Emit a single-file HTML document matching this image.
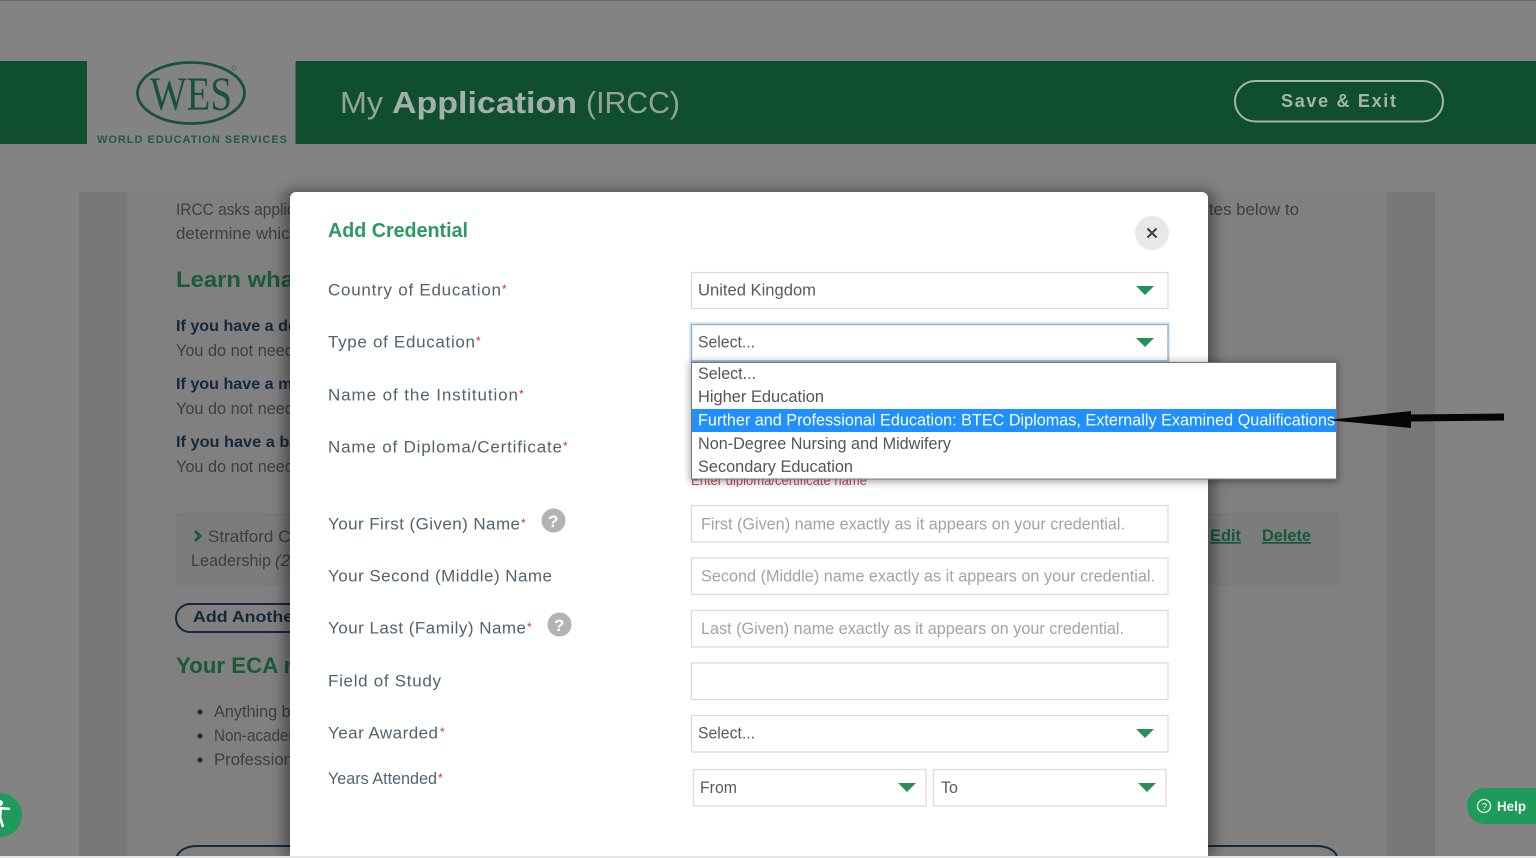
<!DOCTYPE html>
<html><head><meta charset="utf-8"><style>
html,body{margin:0;padding:0;width:1536px;height:858px;overflow:hidden;background:#808080}
svg{display:block;position:absolute;left:0;top:0;overflow:hidden;filter:blur(.3px)}
text{font-family:"Liberation Sans",sans-serif;white-space:pre}
.l{font-size:17px;fill:#52636f}
.s{font-size:12px;fill:#c8354f}
.v{font-size:17px;fill:#5a5a5a}
.p{font-size:17px;fill:#a3a3a3}
.o{font-size:17px;fill:#555}
.b{font-size:17px;fill:#3a3f44}
.h{font-size:16px;font-weight:bold;fill:#14293a}
.g{font-size:22px;font-weight:bold;fill:#195a38}
.f{fill:#fff;stroke:#dcdcdc;stroke-width:1.300}
.a{fill:#26905c}
</style></head><body>
<svg width="1536" height="858" viewBox="0 0 1536 858" xmlns="http://www.w3.org/2000/svg">
<defs>
<filter id="sh" x="-10%" y="-10%" width="120%" height="120%"><feGaussianBlur stdDeviation="7"/></filter>
<filter id="sh2" x="-10%" y="-20%" width="120%" height="140%"><feGaussianBlur stdDeviation="4"/></filter>
<clipPath id="red"><rect x="685" y="479" width="200" height="8"/></clipPath>
</defs>
<rect width="1536" height="858" fill="#838383"/>
<rect y="0" width="1536" height="1" fill="#666"/>
<rect x="79" y="192" width="48" height="666" fill="#777"/>
<rect x="127" y="192" width="1260" height="666" fill="#808080"/>
<rect x="1387" y="192" width="48" height="666" fill="#777"/>
<!-- header -->
<rect y="61" width="87" height="83" fill="#0f4f30"/>
<rect x="295.500" y="61" width="1240.500" height="83" fill="#0f4f30"/>
<ellipse cx="191" cy="93" rx="53.500" ry="30.500" fill="none" stroke="#17523a" stroke-width="2.800"/>
<text x="150" y="110" textLength="82" lengthAdjust="spacingAndGlyphs" style="font-family:'Liberation Serif',serif;font-size:48px;fill:#17523a">WES</text>
<circle cx="234" cy="68" r="2" fill="none" stroke="#3c6a55" stroke-width=".7"/>
<text x="97" y="143" textLength="190" lengthAdjust="spacing" style="font-size:11px;font-weight:bold;fill:#225a42">WORLD EDUCATION SERVICES</text>
<text x="340" y="113" textLength="43" lengthAdjust="spacingAndGlyphs" style="font-size:31px;fill:#93a398">My</text>
<text x="392" y="113" textLength="185" lengthAdjust="spacingAndGlyphs" style="font-size:31px;font-weight:bold;fill:#a4b0a9">Application</text>
<text x="586" y="113" textLength="94" lengthAdjust="spacingAndGlyphs" style="font-size:31px;fill:#93a398">(IRCC)</text>
<rect x="1235" y="81" width="208" height="40.500" rx="20.250" fill="none" stroke="#a6b4ab" stroke-width="2"/>
<text x="1281" y="107" textLength="115" lengthAdjust="spacing" style="font-size:18px;font-weight:bold;fill:#a6b4ab">Save &amp; Exit</text>
<!-- background content -->
<text class="b" x="176" y="215" textLength="165" lengthAdjust="spacingAndGlyphs">IRCC asks applicants to</text>
<text class="b" x="176" y="239" textLength="170" lengthAdjust="spacingAndGlyphs">determine which of the</text>
<text class="g" x="176" y="287" textLength="175" lengthAdjust="spacingAndGlyphs">Learn what you</text>
<text class="h" x="176" y="331" textLength="155" lengthAdjust="spacingAndGlyphs">If you have a degree</text>
<text class="b" x="176" y="356" textLength="136" lengthAdjust="spacingAndGlyphs">You do not need to</text>
<text class="h" x="176" y="389" textLength="155" lengthAdjust="spacingAndGlyphs">If you have a master</text>
<text class="b" x="176" y="414" textLength="136" lengthAdjust="spacingAndGlyphs">You do not need to</text>
<text class="h" x="176" y="447" textLength="155" lengthAdjust="spacingAndGlyphs">If you have a bachel</text>
<text class="b" x="176" y="472" textLength="136" lengthAdjust="spacingAndGlyphs">You do not need to</text>
<text class="b" x="1209" y="215" textLength="90" lengthAdjust="spacingAndGlyphs">tes below to</text>
<rect x="176" y="514" width="1162" height="70" fill="#7c7c7c" stroke="#767676"/>
<path d="M195 531l5 5-5 5" fill="none" stroke="#155c3a" stroke-width="3"/>
<text class="b" x="208" y="542" textLength="128" lengthAdjust="spacingAndGlyphs">Stratford College</text>
<text class="b" x="191" y="566" textLength="80" lengthAdjust="spacingAndGlyphs">Leadership</text>
<text class="b" x="275" y="566" font-style="italic">(2019</text>
<text x="1210" y="541" textLength="31" lengthAdjust="spacingAndGlyphs" style="font-size:17px;font-weight:bold;fill:#16583a;text-decoration:underline">Edit</text>
<text x="1262" y="541" textLength="49" lengthAdjust="spacingAndGlyphs" style="font-size:17px;font-weight:bold;fill:#16583a;text-decoration:underline">Delete</text>
<rect x="176" y="604" width="180" height="28" rx="14" fill="none" stroke="#14293a" stroke-width="2"/>
<text x="193" y="622" textLength="107" lengthAdjust="spacingAndGlyphs" style="font-size:16px;font-weight:bold;fill:#14293a">Add Another</text>
<text class="g" x="176" y="673" textLength="172" lengthAdjust="spacingAndGlyphs">Your ECA report</text>
<circle cx="200" cy="712" r="2.500" fill="#1e2a33"/><circle cx="200" cy="736" r="2.500" fill="#1e2a33"/><circle cx="200" cy="760" r="2.500" fill="#1e2a33"/>
<text class="b" x="214" y="717" textLength="110" lengthAdjust="spacingAndGlyphs">Anything below</text>
<text class="b" x="214" y="741" textLength="98" lengthAdjust="spacingAndGlyphs">Non-academic</text>
<text class="b" x="214" y="765" textLength="92" lengthAdjust="spacingAndGlyphs">Professional</text>
<path d="M177 858V866M177 858a20 12 0 0 1 20-12H1317a20 12 0 0 1 20 12" fill="none" stroke="#14293a" stroke-width="2"/>
<!-- a11y -->
<path d="M0 793A22 22 0 0 1 0 837Z" fill="#1f9a5a"/>
<path d="M0 800a3 3 0 0 1 0 6Z" fill="#fff"/>
<path d="M0 808L10 809M1 808L0 817M0 817L3 827" fill="none" stroke="#fff" stroke-width="2.600"/>
<!-- help -->
<path d="M1536 788H1485a18 18 0 0 0 0 36H1536Z" fill="#1f9a5a"/>
<circle cx="1484" cy="806" r="6.500" fill="none" stroke="#e8f4ed" stroke-width="1.300"/>
<text x="1481.500" y="810" style="font-size:10px;fill:#e8f4ed">?</text>
<text x="1497" y="811" textLength="29" lengthAdjust="spacingAndGlyphs" style="font-size:14px;font-weight:bold;fill:#f2f8f4">Help</text>
<!-- modal -->
<rect x="284" y="190" width="930" height="668" rx="8" fill="#000" opacity=".4" filter="url(#sh)"/>
<path d="M296 192H1202a6 6 0 0 1 6 6V856H290V198a6 6 0 0 1 6-6z" fill="#fff"/>
<text x="328" y="237" textLength="140" lengthAdjust="spacingAndGlyphs" style="font-size:20px;font-weight:bold;fill:#2a9a63">Add Credential</text>
<circle cx="1152" cy="233" r="17" fill="#e8e8e8"/>
<path d="M1147.500 228.500l9 9m0-9l-9 9" stroke="#444" stroke-width="2.200" fill="none"/>
<!-- labels -->
<text class="l" x="328" y="295.500" textLength="173" lengthAdjust="spacing">Country of Education</text><text class="s" x="502" y="293">*</text>
<text class="l" x="328" y="347.500" textLength="147" lengthAdjust="spacing">Type of Education</text><text class="s" x="476" y="345">*</text>
<text class="l" x="328" y="400.500" textLength="190" lengthAdjust="spacing">Name of the Institution</text><text class="s" x="519" y="398">*</text>
<text class="l" x="328" y="452.500" textLength="234" lengthAdjust="spacing">Name of Diploma/Certificate</text><text class="s" x="563" y="450">*</text>
<text class="l" x="328" y="529.500" textLength="192" lengthAdjust="spacing">Your First (Given) Name</text><text class="s" x="521" y="527">*</text>
<text class="l" x="328" y="581.500" textLength="224" lengthAdjust="spacing">Your Second (Middle) Name</text>
<text class="l" x="328" y="633.500" textLength="198" lengthAdjust="spacing">Your Last (Family) Name</text><text class="s" x="527" y="631">*</text>
<text class="l" x="328" y="686.500" textLength="113" lengthAdjust="spacing">Field of Study</text>
<text class="l" x="328" y="738.500" textLength="110" lengthAdjust="spacing">Year Awarded</text><text class="s" x="440" y="736">*</text>
<text class="l" x="328" y="784" textLength="109" lengthAdjust="spacingAndGlyphs">Years Attended</text><text class="s" x="438" y="782">*</text>
<circle cx="553.500" cy="520.500" r="12" fill="#b3b3b3"/><text x="548" y="527" style="font-size:17px;font-weight:bold;fill:#fff">?</text>
<circle cx="559.500" cy="624.500" r="12" fill="#b3b3b3"/><text x="554" y="631" style="font-size:17px;font-weight:bold;fill:#fff">?</text>
<!-- fields -->
<rect class="f" x="691.500" y="272.500" width="476.500" height="36"/>
<text class="v" x="698" y="295.500" textLength="118" lengthAdjust="spacingAndGlyphs">United Kingdom</text>
<path class="a" d="M1136 286h18l-9 9z"/>
<rect x="689" y="322" width="481" height="41" fill="#dbeaf7"/>
<rect x="691.500" y="324.500" width="476.500" height="36.500" fill="#fff" stroke="#88aed0" stroke-width="1.300"/>
<text class="v" x="698" y="347.500" textLength="57" lengthAdjust="spacingAndGlyphs">Select...</text>
<path class="a" d="M1136 338h18l-9 9z"/>
<text x="691" y="485" textLength="176" lengthAdjust="spacingAndGlyphs" clip-path="url(#red)" style="font-size:14px;fill:#cc4a5e">Enter diploma/certificate name</text>
<rect class="f" x="691.500" y="505.500" width="476.500" height="36.500"/>
<text class="p" x="701" y="529.500" textLength="424" lengthAdjust="spacingAndGlyphs">First (Given) name exactly as it appears on your credential.</text>
<rect class="f" x="691.500" y="558" width="476.500" height="36.500"/>
<text class="p" x="701" y="581.500" textLength="454" lengthAdjust="spacingAndGlyphs">Second (Middle) name exactly as it appears on your credential.</text>
<rect class="f" x="691.500" y="610.500" width="476.500" height="36.500"/>
<text class="p" x="701" y="634" textLength="423" lengthAdjust="spacingAndGlyphs">Last (Given) name exactly as it appears on your credential.</text>
<rect class="f" x="691.500" y="663" width="476.500" height="36.500"/>
<rect class="f" x="691.500" y="715.500" width="476.500" height="36.500"/>
<text class="v" x="698" y="738.500" textLength="57" lengthAdjust="spacingAndGlyphs">Select...</text>
<path class="a" d="M1136 729h18l-9 9z"/>
<rect class="f" x="693.500" y="769.500" width="232.500" height="36.500"/>
<text class="v" x="700" y="793" textLength="37" lengthAdjust="spacingAndGlyphs">From</text>
<path class="a" d="M898 783h18l-9 9z"/>
<rect class="f" x="933.500" y="769.500" width="232.500" height="36.500"/>
<text class="v" x="941" y="793" textLength="17" lengthAdjust="spacingAndGlyphs">To</text>
<path class="a" d="M1138 783h18l-9 9z"/>
<!-- dropdown -->
<rect x="690" y="362" width="648" height="120" fill="#000" opacity=".35" filter="url(#sh2)"/>
<rect x="691.500" y="362.500" width="645" height="116.500" fill="#fff" stroke="#777"/>
<rect x="692" y="409" width="644" height="23" fill="#1e90ff"/>
<text class="o" x="698" y="379" textLength="58" lengthAdjust="spacingAndGlyphs">Select...</text>
<text class="o" x="698" y="402" textLength="126" lengthAdjust="spacingAndGlyphs">Higher Education</text>
<text x="698" y="425.500" textLength="637" lengthAdjust="spacingAndGlyphs" style="font-size:17px;fill:#fff">Further and Professional Education: BTEC Diplomas, Externally Examined Qualifications</text>
<text class="o" x="698" y="449" textLength="253" lengthAdjust="spacingAndGlyphs">Non-Degree Nursing and Midwifery</text>
<text class="o" x="698" y="472" textLength="155" lengthAdjust="spacingAndGlyphs">Secondary Education</text>
<!-- annotation arrow -->
<path d="M1328 420L1411 411L1411 414.500L1504 413.500L1504 420.500L1411 421.500L1411 428Z" fill="#050505"/>
<rect y="856" width="1536" height="2" fill="#e6e6e6"/>
</svg>
</body></html>
